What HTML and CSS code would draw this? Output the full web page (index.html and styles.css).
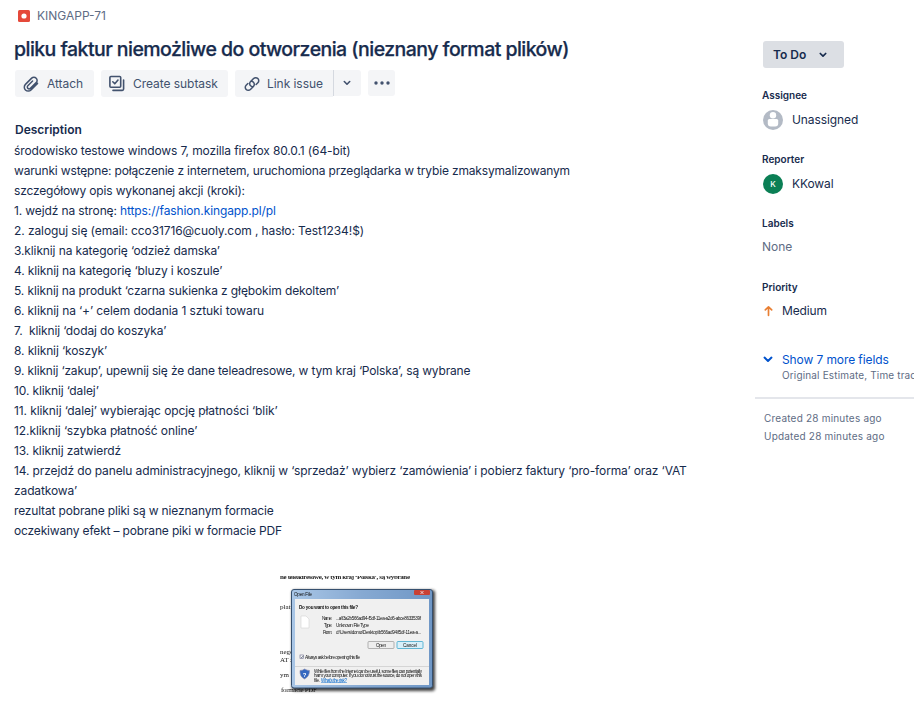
FILE: index.html
```html
<!DOCTYPE html>
<html lang="pl">
<head>
<meta charset="utf-8">
<title>KINGAPP-71</title>
<link rel="stylesheet" href="styles.css">
</head>
<body>
<div class="page">
  <main class="issue">
    <div class="crumb">
      <svg width="12" height="12" viewBox="0 0 12 12"><rect width="12" height="12" rx="1.5" fill="#e5493a"/><circle cx="6" cy="6" r="2.6" fill="#fff"/></svg>
      <span>KINGAPP-71</span>
    </div>
    <h1>pliku faktur niemożliwe do otworzenia (nieznany format plików)</h1>
    <div class="toolbar">
      <button class="btn attach">
        <svg width="18" height="18" viewBox="0 0 24 24"><path d="M20.700 11.200l-8.700 8.700a5.200 5.200 0 0 1-7.400 0 5.200 5.200 0 0 1 0-7.400l8.300-8.300a4.200 4.200 0 0 1 6 0 4.200 4.200 0 0 1 0 6l-7.700 7.600a2.400 2.400 0 0 1-3.400 0 2.400 2.400 0 0 1 0-3.400l6.300-6.300"/></svg>
        <span>Attach</span>
      </button>
      <button class="btn subtask">
        <svg width="18" height="18" viewBox="0 0 18 18"><rect x="1.900" y="1.500" width="10.800" height="10.800" rx="1"/><path d="M4.800 6.800l2 2 3.200-3.700M5 15.400h9.300q1.300 0 1.300-1.300V5"/></svg>
        <span>Create subtask</span>
      </button>
      <div class="split">
        <button class="btn link">
          <svg width="18" height="18" viewBox="0 0 24 24"><path d="M12.800 15.600a4 4 0 0 1-2.700-1.200 4 4 0 0 1 0-5.700l4-4a4 4 0 0 1 5.700 0 4 4 0 0 1 0 5.700l-2.300 2.300M11.200 8.400a4 4 0 0 1 2.700 1.200 4 4 0 0 1 0 5.700l-4 4a4 4 0 0 1-5.700 0 4 4 0 0 1 0-5.700l2.300-2.300"/></svg>
          <span>Link issue</span>
        </button>
        <button class="btn more"><svg width="8" height="6" viewBox="0 0 8 6"><path d="M1.300 1.500L4 4.200l2.700-2.700"/></svg></button>
      </div>
      <button class="btn dots"><svg width="16" height="4" viewBox="0 0 16 4"><circle cx="2" cy="2" r="1.700"/><circle cx="8" cy="2" r="1.700"/><circle cx="14" cy="2" r="1.700"/></svg></button>
    </div>
    <h2>Description</h2>
    <div class="desc">
      <p>środowisko testowe windows 7, mozilla firefox 80.0.1 (64-bit)</p>
      <p class="tight">warunki wstępne: połączenie z internetem, uruchomiona przeglądarka w trybie zmaksymalizowanym</p>
      <p class="tight">szczegółowy opis wykonanej akcji (kroki):</p>
      <p>1. wejdź na stronę: <a href="#">https://fashion.kingapp.pl/pl</a></p>
      <p class="loose">2. zaloguj się (email: cco31716@cuoly.com , hasło: Test1234!$)</p>
      <p>3.kliknij na kategorię ‘odzież damska’</p>
      <p>4. kliknij na kategorię ‘bluzy i koszule’</p>
      <p>5. kliknij na produkt ‘czarna sukienka z głębokim dekoltem’</p>
      <p class="loose">6. kliknij na ‘+’ celem dodania 1 sztuki towaru</p>
      <p>7.&nbsp; kliknij ‘dodaj do koszyka’</p>
      <p>8. kliknij ‘koszyk’</p>
      <p class="tight">9. kliknij ‘zakup’, upewnij się że dane teleadresowe, w tym kraj ‘Polska’, są wybrane</p>
      <p>10. kliknij ‘dalej’</p>
      <p class="loose">11. kliknij ‘dalej’ wybierając opcję płatności ‘blik’</p>
      <p class="loose">12.kliknij ‘szybka płatność online’</p>
      <p>13. kliknij zatwierdź</p>
      <p>14. przejdź do panelu administracyjnego, kliknij w ‘sprzedaż’ wybierz ‘zamówienia’ i pobierz faktury ‘pro-forma’ oraz ‘VAT<br>zadatkowa’</p>
      <p class="tight">rezultat pobrane pliki są w nieznanym formacie</p>
      <p class="tight">oczekiwany efekt – pobrane piki w formacie PDF</p>
    </div>
    <svg class="shot" width="160" height="122" viewBox="278 573 160 122">
      <defs>
        <linearGradient id="frame" x1="0" y1="0" x2="1" y2="0"><stop offset="0" stop-color="#a9c6e6"/><stop offset=".5" stop-color="#86a9d2"/><stop offset="1" stop-color="#6f97c6"/></linearGradient>
        <filter id="shade" x="-10%" y="-10%" width="120%" height="120%"><feGaussianBlur stdDeviation="1.6"/></filter>
        <clipPath id="edge"><rect x="280" y="576" width="158" height="119"/></clipPath>
      </defs>
      <g class="paper" clip-path="url(#edge)">
        <text x="280" y="578.500" textLength="130" font-weight="700">ne teleadresowe, w tym kraj ‘Polska’, są wybrane</text>
        <text x="280" y="609">płatn</text>
        <text x="280" y="654">nego</text>
        <text x="280" y="662">AT z</text>
        <text x="280" y="677">ym f</text>
        <text x="281" y="692" textLength="36">formacie PDF</text>
      </g>
      <rect x="292" y="590" width="143" height="101" rx="3" fill="#000" opacity=".75" filter="url(#shade)"/>
      <rect x="291.500" y="589.500" width="141" height="98.500" rx="2.500" fill="url(#frame)" stroke="#36506f"/>
      <rect x="295" y="599" width="134" height="86" fill="#f0f0f0"/>
      <path d="M295 666.500h134" stroke="#d5d5d5"/>
      <rect x="414" y="590" width="16" height="5" rx="1" fill="#c94135"/>
      <path d="M420.500 591l3 3m0-3l-3 3" stroke="#fff" stroke-width=".7"/>
      <path d="M301 616h5l3 3v9h-8z" fill="#fff" stroke="#d4d4d4" stroke-width=".6"/>
      <g class="ui">
        <text x="294" y="596" textLength="18">Open File</text>
        <text x="299" y="609" textLength="59" font-weight="700">Do you want to open this file?</text>
        <text x="322" y="620" textLength="10">Name:</text><text x="336" y="620" textLength="85">...a\f3a2b566ad94-f5df-11ea-a2d6-abce8633539f</text>
        <text x="324" y="627" textLength="8">Type:</text><text x="336" y="627" textLength="33">Unknown File Type</text>
        <text x="323" y="633.500" textLength="9">From:</text><text x="336" y="633.500" textLength="85">d:\Users\domo\Desktop\b566ad94\f5df-11ea-a...</text>
        <rect x="368" y="641.500" width="26" height="7" rx="1" fill="#eee" stroke="#888" stroke-width=".6"/>
        <rect x="397" y="641.500" width="26" height="7" rx="1" fill="#d8f0fa" stroke="#3fa7cb" stroke-width=".8"/>
        <text x="376" y="647" textLength="10">Open</text><text x="403" y="647" textLength="14">Cancel</text>
        <rect x="300" y="655" width="3.500" height="3.500" fill="#fff" stroke="#668" stroke-width=".6"/>
        <path d="M300.700 656.800l1 1 1.500-2" stroke="#234" stroke-width=".6" fill="none"/>
        <text x="305" y="659" textLength="55">Always ask before opening this file</text>
        <path d="M304.500 669q3 1.500 5 1.500 0 6-5 8.500-5-2.500-4.500-8.500 2.500 0 4.500-1.500z" fill="#3568c0" stroke="#88a" stroke-width=".6"/>
        <text x="302.700" y="676.500" class="q">?</text>
        <text x="314" y="672.500" textLength="108">While files from the Internet can be useful, some files can potentially</text>
        <text x="314" y="677" textLength="108">harm your computer. If you do not trust the source, do not open this</text>
        <text x="314" y="681.500" textLength="6">file.</text><text x="321" y="681.500" textLength="26" class="risk">What’s the risk?</text>
      </g>
    </svg>
  </main>
  <aside class="side">
    <button class="status"><span>To Do</span><svg width="8" height="6" viewBox="0 0 8 6"><path d="M1.300 1.500L4 4.200l2.700-2.700"/></svg></button>
    <section class="field"><h3>Assignee</h3>
      <div class="value"><svg width="20" height="20" viewBox="0 0 20 20"><circle cx="10" cy="10" r="10" fill="#b3bac5"/><circle cx="10" cy="5.300" r="3.200" fill="#fff"/><path d="M4.800 10.500q0-1.500 1.500-1.500h7.400q1.500 0 1.500 1.500v3q0 3-3 3H7.800q-3 0-3-3z" fill="#fff"/></svg><span class="who">Unassigned</span></div>
    </section>
    <section class="field"><h3>Reporter</h3>
      <div class="value person"><span class="avatar">K</span><span class="who">KKowal</span></div>
    </section>
    <section class="field"><h3>Labels</h3><div class="value none">None</div></section>
    <section class="field"><h3>Priority</h3>
      <div class="value prio"><svg width="12" height="12" viewBox="0 0 12 12"><path d="M5.500 10.300V1.800M2.300 4.900L5.500 1.800 8.700 4.900" fill="none" stroke="#e97f33" stroke-width="1.700" stroke-linecap="round" stroke-linejoin="round"/></svg><span>Medium</span></div>
    </section>
    <div class="show"><svg width="10" height="7" viewBox="0 0 10 7"><path d="M1.500 1.600L5 4.900l3.500-3.300"/></svg>
      <div><a href="#">Show 7 more fields</a><div class="hint">Original Estimate, Time tracking</div></div>
    </div>
    <div class="dates"><div>Created 28 minutes ago</div><div>Updated 28 minutes ago</div></div>
  </aside>
</div>
</body>
</html>
```
FILE: styles.css
```css
* { box-sizing: border-box; }
body {
  margin: 0;
  width: 914px;
  height: 709px;
  overflow: hidden;
  background: #fff;
  color: #172b4d;
  font: 12px/20px Inter, "Liberation Sans", sans-serif;
}
h1, h2, h3, p { margin: 0; }
a { color: #0052cc; text-decoration: none; }
.page { display: grid; grid-template-columns: 755px 159px; height: 709px; overflow: hidden; }
.issue { padding: 6px 0 0 14px; }
.crumb { display: flex; align-items: center; gap: 7px; padding-left: 4px; height: 20px; color: #5e6c84; }
h1 { margin-top: 10px; font-size: 19.5px; line-height: 26px; font-weight: 500; letter-spacing: -0.54px; white-space: nowrap; -webkit-text-stroke: 0.25px; }
.toolbar { display: flex; align-items: flex-start; gap: 7px; margin: 8px 0 0 1px; }
.btn {
  display: flex;
  align-items: center;
  gap: 7px;
  height: 27px;
  padding: 0 0 0 7px;
  border: 0;
  border-radius: 3px;
  background: #f4f5f7;
  color: #42526e;
  font: inherit;
  letter-spacing: -0.05px;
  white-space: nowrap;
}
.btn svg { flex: none; fill: none; stroke: #42526e; stroke-width: 1.6; stroke-linecap: round; stroke-linejoin: round; }
.attach { width: 79px; }
.attach svg, .link svg { stroke-width: 2; }
.subtask { width: 127px; }
.split { display: flex; align-items: flex-start; }
.link { width: 98px; padding-left: 8px; gap: 6px; border-radius: 3px 0 0 3px; }
.more { width: 28px; height: 26px; padding: 0 2px 0 0; justify-content: center; border-left: 1px solid #d5d9e0; border-radius: 0 3px 3px 0; }
.dots { width: 27px; height: 26px; padding: 0; justify-content: center; }
.dots svg { fill: #42526e; stroke: none; }
h2 { margin: 23px 0 0 1px; font-size: 12px; line-height: 20px; font-weight: 600; }
.desc { margin-top: 1px; letter-spacing: -0.12px; white-space: nowrap; }
.tight { letter-spacing: -0.165px; }
.loose { letter-spacing: -0.09px; }
.shot { display: block; margin: 32px 0 0 264px; filter: blur(0.35px); }
.paper { font: 7px "Liberation Serif", serif; fill: #222; }
.ui { font: 4.6px "Liberation Sans", sans-serif; fill: #111; stroke-width: 0; }
.q { font-size: 6px; font-weight: 700; fill: #fff; }
.risk { fill: #0066cc; text-decoration: underline; }
.side { padding-top: 41px; overflow: hidden; white-space: nowrap; }
.status {
  display: flex;
  align-items: center;
  gap: 13px;
  width: 81px;
  height: 27px;
  margin-left: 8px;
  padding: 0 0 0 10px;
  border: 0;
  border-radius: 3px;
  background: #dcdfe4;
  color: #172b4d;
  font: inherit;
  font-weight: 600;
}
.status svg, .show svg { flex: none; fill: none; stroke: #172b4d; stroke-width: 1.7; stroke-linecap: round; stroke-linejoin: round; }
.field { height: 64px; padding-left: 7px; }
.status + .field { margin-top: 19px; }
h3 { font-size: 10px; line-height: 16px; font-weight: 600; }
.value { display: flex; align-items: center; gap: 9px; height: 20px; margin-top: 7px; padding-left: 1px; }
.who { letter-spacing: -0.1px; }
.person .avatar { width: 20px; height: 20px; border-radius: 50%; background: #0b7f55; color: #fff; font-size: 8px; font-weight: 500; text-align: center; }
.none { margin-top: 6px; padding-left: 0; color: #5e6c84; }
.prio { gap: 7px; margin-top: 6px; letter-spacing: -0.15px; }
.show { display: flex; gap: 9px; margin-top: 9px; padding-left: 8px; }
.show svg { margin-top: 4px; stroke: #0052cc; stroke-width: 2; }
.show a { display: block; line-height: 16px; letter-spacing: -0.1px; }
.hint { margin-top: -1px; color: #5e6c84; font-size: 10px; line-height: 16px; letter-spacing: 0.15px; }
.dates { margin-top: 14px; padding: 10px 0 0 9px; border-top: 2px solid #e4e6eb; color: #5e6c84; font-size: 10px; line-height: 18px; letter-spacing: 0.2px; }
```
